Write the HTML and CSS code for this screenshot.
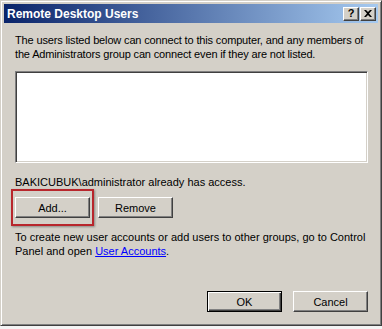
FILE: index.html
```html
<!DOCTYPE html>
<html lang="en">
<head>
  <meta charset="UTF-8">
  <title>Remote Desktop Users</title>
  <link rel="stylesheet" href="styles.css">
</head>
<body>
  <div class="window">
    <div class="titlebar">
      <span class="title">Remote Desktop Users</span>
      <div class="caption-buttons">
        <span class="cap-btn">?</span>
        <span class="cap-btn">
          <svg width="8" height="7" viewBox="0 0 8 7"><path d="M0 0h2l2 2 2-2h2L5 3.5 8 7H6L4 5 2 7H0l3-3.5z" fill="#000"/></svg>
        </span>
      </div>
    </div>

    <div class="content">
      <p class="intro">The users listed below can connect to this computer, and any members of the Administrators group can connect even if they are not listed.</p>

      <div class="listbox"></div>

      <p class="access">BAKICUBUK\administrator already has access.</p>

      <div class="row">
        <button class="btn highlight">Add...</button>
        <button class="btn">Remove</button>
      </div>

      <p class="help">To create new user accounts or add users to other groups, go to Control Panel and open <a href="#">User Accounts</a>.</p>

      <div class="footer">
        <button class="btn default">OK</button>
        <button class="btn">Cancel</button>
      </div>
    </div>
  </div>
</body>
</html>
```
FILE: styles.css
```css
* {
  box-sizing: border-box;
}

body {
  margin: 0;
  background: #f4f4f4;
  font-family: 'Liberation Sans', Arial, sans-serif;
  font-size: 11px;
  color: #000;
}

.window {
  width: 382px;
  height: 326px;
  background: #d4d0c8;
  border: 1px solid;
  border-color: #d4d0c8 #404040 #404040 #d4d0c8;
  box-shadow: inset 1px 1px #fff, inset -1px -1px #808080;
  padding: 3px;
  display: flex;
  flex-direction: column;
}

.titlebar {
  height: 19px;
  background: linear-gradient(to right, #0a246a, #a6caf0);
  display: flex;
  align-items: center;
  justify-content: space-between;
  padding: 0 2px 0 3px;
}

.title {
  color: #fff;
  font-weight: bold;
  font-size: 12px;
}

.caption-buttons {
  display: flex;
  gap: 1px;
}

.cap-btn {
  width: 16px;
  height: 14px;
  background: #d4d0c8;
  border: 1px solid;
  border-color: #fff #404040 #404040 #fff;
  box-shadow: inset -1px -1px #808080;
  display: flex;
  align-items: center;
  justify-content: center;
  font-weight: bold;
  font-size: 11px;
  line-height: 1;
}

.content {
  flex: 1;
  padding: 8px 10px 0 11px;
  display: flex;
  flex-direction: column;
}

p {
  margin: 0;
  line-height: 14px;
}

.intro {
  margin-top: 2px;
  letter-spacing: -0.15px;
}

.listbox {
  margin-top: 10px;
  height: 92px;
  background: #fff;
  border: 1px solid;
  border-color: #808080 #fff #fff #808080;
  box-shadow: inset 1px 1px #404040, inset -1px -1px #d4d0c8;
}

.access {
  margin-top: 12px;
}

.row {
  display: flex;
  gap: 8px;
  margin-top: 8px;
}

.btn {
  width: 75px;
  height: 21px;
  background: #d4d0c8;
  border: 1px solid;
  border-color: #fff #404040 #404040 #fff;
  box-shadow: inset -1px -1px #808080;
  font-family: inherit;
  font-size: 11px;
  padding: 0;
  color: #000;
}

.highlight {
  position: relative;
}

.highlight::after {
  content: "";
  position: absolute;
  top: -9px;
  bottom: -9px;
  left: -5px;
  right: -5px;
  border: 2px solid #b8262c;
  box-shadow: 1px 1px 2px rgba(0, 0, 0, 0.35);
}

.default {
  border: 1px solid #000;
  box-shadow: inset 1px 1px #fff, inset -1px -1px #404040, inset -2px -2px #808080;
}

.help {
  margin-top: 12px;
}

.help a {
  display: inline-block;
  color: #0000ff;
}

.footer {
  margin-top: auto;
  margin-bottom: 10px;
  display: flex;
  justify-content: flex-end;
  gap: 11px;
}
```
